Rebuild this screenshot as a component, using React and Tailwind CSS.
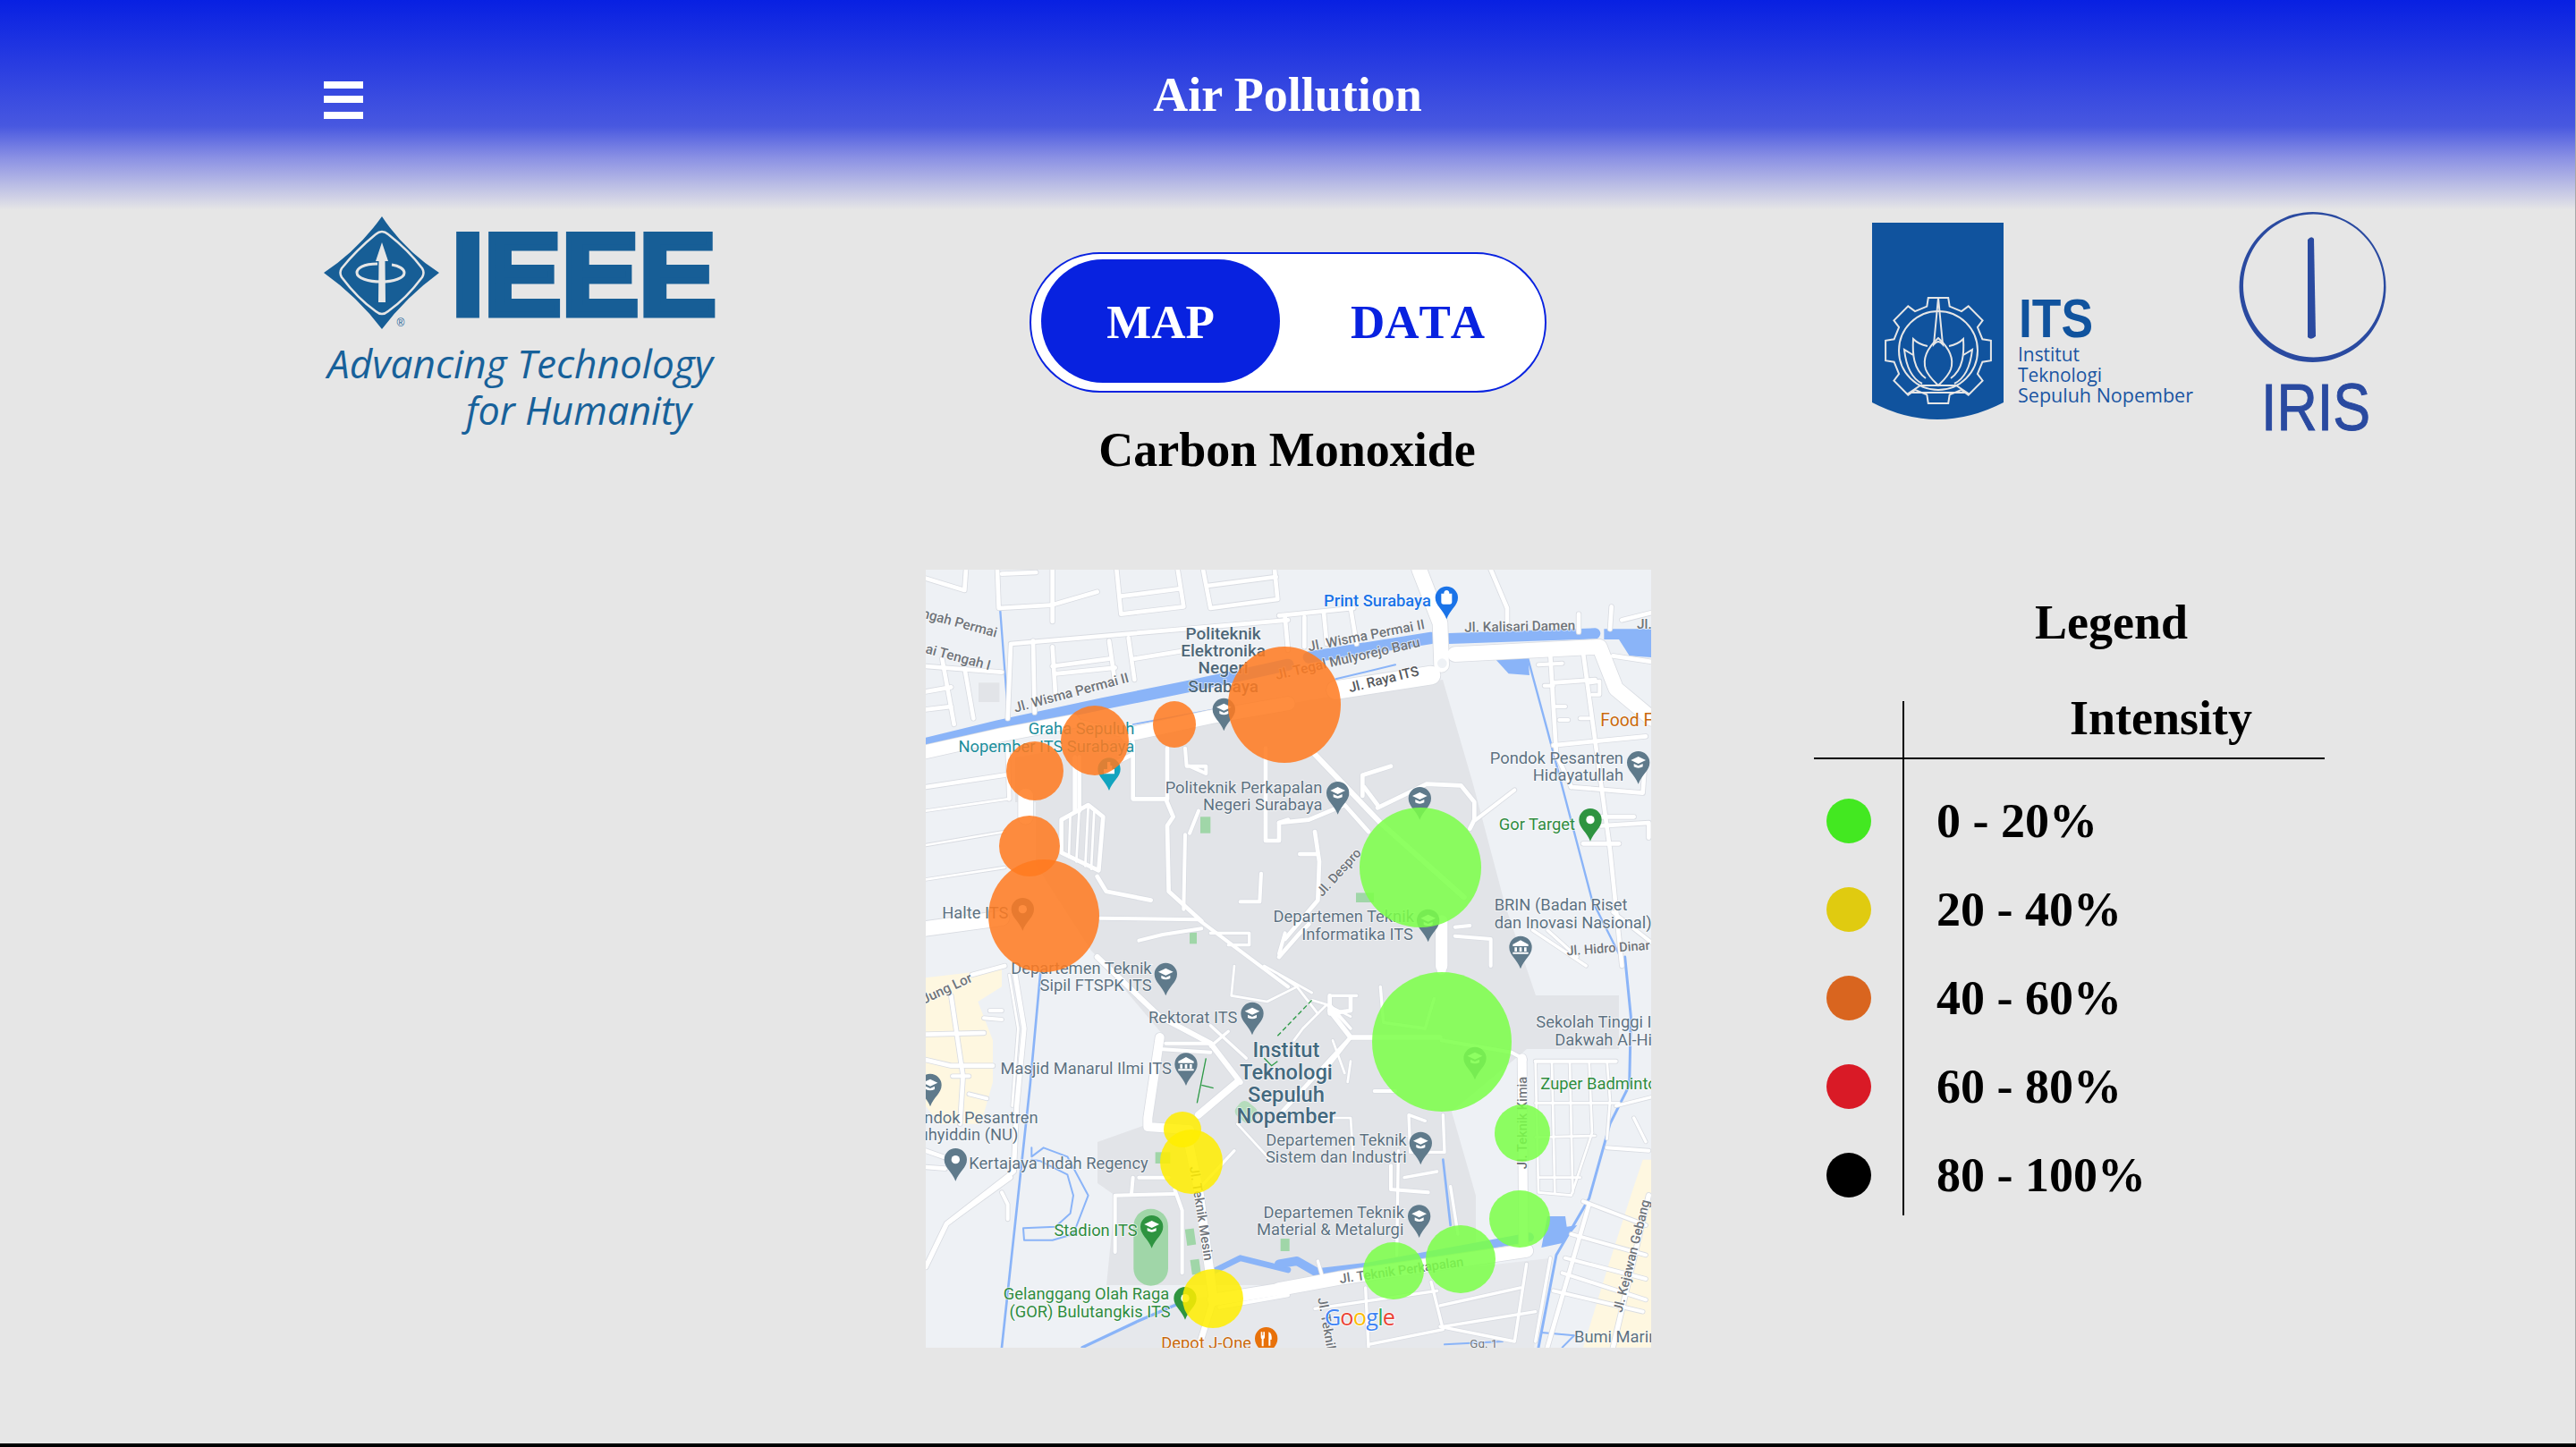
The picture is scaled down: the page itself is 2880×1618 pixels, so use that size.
import React from 'react';

const ROBOTO = "Roboto, 'Liberation Sans', sans-serif";

const SLATE = '#5d7282';
const GREY = '#6f747a';
const TEAL = '#1b8e9c';
const LEAF = '#2f8c3f';
const AMBER = '#c9690c';
const PIN = '#5f7a8b';

// map drawn in four quadrants, each one in 3x coordinates
const QUADS = {
  q1: 'translate(-15,-7) scale(0.33333)',
  q2: 'translate(395,-7) scale(0.33333)',
  q3: 'translate(-15,433) scale(0.33333)',
  q4: 'translate(395,433) scale(0.33333)',
};

const ROADS = {
  q1: [
    [14, '285,20 290,150 465,140 620,95'], [14, '180,20 175,90 45,50'], [14, '300,35 415,30'], [14, '470,20 470,195'],
    [14, '685,20 700,170 910,145 890,20'], [14, '700,110 895,85'], [14, '975,20 1000,150 1225,120 1215,20'], [14, '990,75 1220,45'],
    [14, '330,270 1260,190'], [14, '330,275 320,520'], [14, '405,260 410,500'], [14, '470,280 480,440'], [14, '660,260 680,400'],
    [14, '725,250 745,390'], [14, '470,345 660,320'], [14, '745,320 930,290'], [14, '480,370 680,350'], [14, '45,345 300,365'],
    [14, '100,320 140,540'], [14, '175,350 205,520'], [14, '45,430 130,415'], [14, '45,490 130,480'], [14, '45,750 310,710'],
    [8, '45,830 320,790'], [8, '45,945 310,900'], [8, '45,1060 310,1020'], [14, '320,620 325,790'], [14, '545,650 545,830'], [14, '560,650 560,830'],
    [14, '500,860 590,810 640,850 625,1030 500,970 500,860'], [8, '530,840 525,985'], [8, '560,825 550,1000'], [8, '590,815 580,1015'], [8, '610,830 600,1025'],
    [14, '740,640 740,790 850,790 875,850 855,880 860,1100 970,1200'], [12, '915,620 920,680 985,680 985,705 930,680'], [14, '855,620 855,790'],
    [14, '1185,620 1185,930 1230,930 1230,870 1260,860'], [14, '620,1050 650,1100 800,1130'], [12, '915,910 910,1160'], [12, '960,830 930,905'],
    [12, '1170,1040 1165,1135 1100,1135'], [12, '630,1190 960,1195 1260,1420'], [12, '760,1265 840,1245 970,1225'], [10, '1000,1240 1130,1240 1130,1280 1060,1280'],
    [45, '45,632 300,575 540,530'], [45, '720,575 1000,515 1260,470'], [22, '540,530 720,575'], [14, '640,690 740,640 740,600'], [50, '380,780 380,850'],
    [50, '45,1225 300,1190'],
  ],
  q2: [
    [14, '0,175 250,150'], [14, '20,180 30,290'], [14, '85,180 85,280'], [14, '150,165 160,270'], [14, '240,150 260,270'], [14, '710,20 765,150 765,200'],
    [14, '1005,170 1005,230'], [14, '1115,145 1110,220'], [14, '1150,190 1250,165'], [14, '1020,300 1110,960 1150,1350'], [14, '920,400 1060,390'],
    [14, '920,610 1230,580'], [14, '1120,310 1250,330'], [12, '870,340 950,335'], [12, '890,410 920,410'], [12, '930,480 960,480'], [12, '940,525 970,525'],
    [12, '1010,520 1040,520'], [12, '1045,400 1075,395 1075,440 1050,440'], [14, '980,750 1220,770 1225,700'], [14, '910,310 930,640 980,750'],
    [14, '1045,850 1190,850'], [14, '1080,880 1240,870 1240,920'], [14, '1020,940 1140,940'], [18, '120,640 340,870 620,1120'], [14, '280,780 280,710 375,680'],
    [14, '285,750 330,810'], [14, '330,820 495,740 610,745 655,800 655,860 640,890'], [12, '660,860 790,760'], [14, '0,870 100,860 220,810 300,900'],
    [14, '120,900 135,1000 130,1130 20,1260'], [14, '70,975 130,975'], [40, '545,1200 545,1350'], [12, '590,1220 640,1215'], [12, '590,1250 710,1260 710,1350'],
    [50, '470,20 540,200 545,340'], [62, '190,425 510,375'], [50, '590,305 1070,280'], [50, '1075,280 1130,420 1250,520'], [14, '0,1320 70,1240 100,1210'],
    [12, '20,1240 0,1310'], [10, '850,1230 1030,1350'], [10, '900,1230 1000,1320'], [12, '1120,1170 1260,1280'],
  ],
  q3: [
    [16, '345,60 375,240 350,500 340,720 115,895 45,1040'], [8, '325,60 355,240 335,500'], [14, '200,60 310,30'], [14, '130,130 170,400 160,560'], [14, '45,260 240,255'],
    [12, '240,205 300,210'], [12, '260,180 300,180'], [14, '45,345 130,365 270,365'], [12, '135,400 190,400'], [12, '190,460 250,475'],
    [14, '45,650 130,680'], [14, '45,705 110,710'], [12, '300,790 320,830 320,880'], [14, '115,895 330,740'], [18, '620,0 830,200 1000,290 1100,420'],
    [12, '850,290 1000,290'], [12, '840,310 1000,320'], [24, '960,530 1090,420'], [30, '830,270 790,540 790,570 930,580'], [12, '680,990 680,800 880,795'],
    [12, '740,740 735,795'], [12, '760,740 860,740'], [12, '905,1060 905,850 880,780'], [10, '1080,650 950,790'], [30, '920,590 960,780 1010,1150'],
    [40, '1010,1150 1260,1110'], [20, '1010,1150 960,1310'], [12, '1030,1175 1260,1135'], [8, '1080,30 1070,130 1190,150 1290,100'], [8, '1180,30 1340,120'],
    [8, '1340,145 1390,160 1470,200'], [8, '1390,160 1310,240 1280,280'], [8, '1390,160 1470,240'], [14, '1470,270 1240,520'], [10, '1490,130 1400,130 1400,160 1470,240'],
    [8, '1410,280 1450,390'], [8, '1350,540 1470,540 1480,690'], [10, '1000,230 1120,340'], [10, '1000,300 1060,250'], [8, '1090,560 1200,680'],
  ],
  q4: [
    [45, '0,1115 200,1078 830,985'], [30, '815,340 820,980'], [12, '545,280 780,320 825,345'], [30, '545,0 545,45'], [14, '170,130 170,190 240,180 240,135'],
    [16, '170,180 240,270 540,270'], [10, '520,140 490,240 350,220 340,100'], [8, '0,60 60,100 130,190'], [12, '240,270 130,410'], [8, '240,350 230,420'],
    [12, '320,450 390,450'], [10, '550,530 555,655 440,655 435,530 490,550'], [12, '375,700 375,780 500,790'], [10, '420,740 530,720'], [10, '400,650 395,1000'],
    [10, '575,770 600,930'], [12, '860,350 1130,350'], [8, '860,350 870,790 980,800 1050,590'], [8, '915,350 925,790'], [8, '975,350 985,790'],
    [8, '1040,350 1050,590'], [8, '1100,350 1110,480 1100,610'], [8, '860,490 1140,490'], [8, '860,605 1060,600'], [8, '870,740 1010,740'],
    [14, '1040,830 900,1310'], [12, '1020,820 1230,900'], [12, '980,930 1230,1000'], [12, '960,1010 1230,1080'], [12, '950,1060 1230,1150'], [12, '920,1120 1220,1190'],
    [16, '1240,800 1120,1310'], [10, '130,1020 150,1090'], [10, '290,1110 300,1310'], [10, '510,1090 550,1250 300,1300'], [10, '120,1180 530,1120'], [10, '540,1170 810,1110'],
    [10, '550,1240 860,1190'], [10, '830,1030 790,1290 540,1240'], [10, '910,1010 860,1290'], [12, '1100,640 1240,650'], [10, '1130,500 1250,470'], [10, '1190,540 1230,620'],
  ],
};

const RIVERS = {
  q1: [[40, '45,605 290,545 640,470 930,412 1100,375 1260,340'], [7, '285,30 320,490'], [5, '740,540 1010,490']],
  q2: [[40, '100,315 510,250'], [36, '570,252 1060,235'], [6, '190,388 390,340'], [7, '835,320 900,560 1050,1130 1160,1350']],
  q3: [
    [8, '430,50 395,430 300,1310'], [6, '400,640 400,670 440,640 520,670 590,800 540,930 470,950 375,950 372,910 480,905 530,860 540,800 520,730 430,685 400,680'],
    [10, '570,1310 760,1220 900,1160'], [20, '1000,1060 1100,1010 1260,1050'],
  ],
  q4: [[30, '0,1030 60,1020 130,1060 300,1040 490,1005 840,940'], [9, '1160,0 1180,200 1175,430 1110,560 1040,810 930,1000 870,1310'], [6, '880,1260 990,1270 950,1310'], [8, '550,680 575,900'], [6, '555,1300 750,1290']],
};

const LABELS = {
  q1: [
    { x: 1043, y: 255, t: 'Politeknik', a: 'middle', s: 57, w: 500, c: '#4e6778' }, { x: 1043, y: 313, t: 'Elektronika', a: 'middle', s: 57, w: 500, c: '#4e6778' },
    { x: 1043, y: 370, t: 'Negeri', a: 'middle', s: 57, w: 500, c: '#4e6778' }, { x: 1043, y: 432, t: 'Surabaya', a: 'middle', s: 57, w: 500, c: '#4e6778' },
    { x: 745, y: 572, t: 'Graha Sepuluh', a: 'end', c: TEAL }, { x: 745, y: 632, t: 'Nopember ITS Surabaya', a: 'end', c: TEAL },
    { x: 848, y: 770, t: 'Politeknik Perkapalan' }, { x: 975, y: 828, t: 'Negeri Surabaya' }, { x: 322, y: 1192, t: 'Halte ITS', a: 'end' },
    { x: 280, y: 248, t: 'Tengah Permai', a: 'end', c: GREY, s: 46, r: 15, w: 500 }, { x: 258, y: 358, t: 'Permai Tengah I', a: 'end', c: GREY, s: 46, r: 15, w: 500 },
    { x: 345, y: 500, t: 'Jl. Wisma Permai II', c: GREY, s: 46, r: -15, w: 500 },
  ],
  q2: [
    { x: 150, y: 145, t: 'Print Surabaya', c: '#1a73e8', w: 500 }, { x: 100, y: 295, t: 'Jl. Wisma Permai II', c: GREY, s: 46, r: -11, w: 500 },
    { x: -8, y: 390, t: 'Jl. Tegal Mulyorejo Baru', c: GREY, s: 46, r: -13, w: 500 }, { x: 238, y: 433, t: 'Jl. Raya ITS', c: '#55585c', s: 46, r: -14, w: 500 },
    { x: 622, y: 230, t: 'Jl. Kalisari Damen', c: GREY, s: 46, r: -1, w: 500 }, { x: 1200, y: 218, t: 'Jl.', c: GREY, s: 46, w: 500 },
    { x: 1078, y: 545, t: 'Food Fest', c: AMBER, s: 58 }, { x: 1155, y: 672, t: 'Pondok Pesantren', a: 'end' }, { x: 1155, y: 730, t: 'Hidayatullah', a: 'end' },
    { x: 993, y: 893, t: 'Gor Target', a: 'end', c: LEAF }, { x: 145, y: 1120, t: 'Jl. Despro', c: GREY, s: 44, r: -48, w: 500 },
    { x: 722, y: 1165, t: 'BRIN (Badan Riset' }, { x: 722, y: 1223, t: 'dan Inovasi Nasional)' }, { x: 965, y: 1315, t: 'Jl. Hidro Dinar', c: GREY, s: 44, r: -4, w: 500 },
    { x: 453, y: 1202, t: 'Departemen Teknik', a: 'end' }, { x: 450, y: 1262, t: 'Informatika ITS', a: 'end' },
  ],
  q3: [
    { x: 803, y: 57, t: 'Departemen Teknik', a: 'end' }, { x: 803, y: 115, t: 'Sipil FTSPK ITS', a: 'end' }, { x: 1090, y: 222, t: 'Rektorat ITS', a: 'end' },
    { x: 870, y: 392, t: 'Masjid Manarul Ilmi ITS', a: 'end' }, { x: 422, y: 557, t: 'Pondok Pesantren', a: 'end' }, { x: 355, y: 615, t: 'Muhyiddin (NU)', a: 'end' },
    { x: 190, y: 710, t: 'Kertajaya Indah Regency' }, { x: 755, y: 935, t: 'Stadion ITS', a: 'end', c: LEAF }, { x: 862, y: 1150, t: 'Gelanggang Olah Raga', a: 'end', c: LEAF },
    { x: 866, y: 1208, t: '(GOR) Bulutangkis ITS', a: 'end', c: LEAF }, { x: 1137, y: 1313, t: 'Depot J-One', a: 'end', c: AMBER },
    { x: 40, y: 158, t: 'Jung Lor', c: GREY, s: 46, r: -25, w: 500 }, { x: 930, y: 705, t: 'Jl. Teknik Mesin', c: GREY, s: 44, r: 81, w: 500 },
    { x: 1254, y: 335, t: 'Institut', a: 'middle', s: 71, w: 500, c: '#44697f' }, { x: 1254, y: 410, t: 'Teknologi', a: 'middle', s: 71, w: 500, c: '#44697f' },
    { x: 1254, y: 485, t: 'Sepuluh', a: 'middle', s: 71, w: 500, c: '#44697f' }, { x: 1254, y: 558, t: 'Nopember', a: 'middle', s: 71, w: 500, c: '#44697f' },
  ],
  q4: [
    { x: 428, y: 632, t: 'Departemen Teknik', a: 'end' }, { x: 428, y: 690, t: 'Sistem dan Industri', a: 'end' }, { x: 420, y: 875, t: 'Departemen Teknik', a: 'end' },
    { x: 418, y: 933, t: 'Material & Metalurgi', a: 'end' }, { x: 862, y: 238, t: 'Sekolah Tinggi Ilmu' }, { x: 925, y: 296, t: 'Dakwah Al-Hikmah' },
    { x: 877, y: 445, t: 'Zuper Badminton', c: LEAF }, { x: 832, y: 712, t: 'Jl. Teknik Kimia', c: GREY, s: 44, r: -90, w: 500 },
    { x: 205, y: 1095, t: 'Jl. Teknik Perkapalan', c: GREY, s: 44, r: -8, w: 500 }, { x: 130, y: 1145, t: 'Jl. Teknik', c: GREY, s: 44, r: 80, w: 500 },
    { x: 1150, y: 1195, t: 'Jl. Kejawan Gebang', c: GREY, s: 44, r: -76, w: 500 }, { x: 990, y: 1292, t: 'Bumi Marina' }, { x: 640, y: 1312, t: 'Gg. 1', c: GREY, s: 40 },
  ],
};

const PINS = {
  q1: [{ x: 1045, y: 490, g: 'cap' }, { x: 660, y: 690, c: '#12a4bf', g: 'tower' }, { x: 370, y: 1160, g: 'dot' }],
  q2: [
    { x: 562, y: 115, c: '#1a73e8', g: 'bag' }, { x: 197, y: 770, g: 'cap' }, { x: 472, y: 788, g: 'cap' }, { x: 1205, y: 668, g: 'cap' },
    { x: 1044, y: 860, c: '#2e9440', g: 'dot' }, { x: 500, y: 1198, g: 'cap' }, { x: 810, y: 1288, g: 'bank' },
  ],
  q3: [
    { x: 850, y: 58, g: 'cap' }, { x: 1140, y: 190, g: 'cap' }, { x: 918, y: 360, g: 'bank' }, { x: 60, y: 430, g: 'cap' }, { x: 145, y: 680, g: 'dot' },
    { x: 803, y: 905, c: '#2e9440', g: 'cap' }, { x: 915, y: 1145, c: '#2e9440', g: 'dot' }, { x: 1187, y: 1280, c: '#e8710a', g: 'fork' },
  ],
  q4: [{ x: 657, y: 340, g: 'cap' }, { x: 475, y: 625, g: 'cap' }, { x: 470, y: 870, g: 'cap' }],
};

// x, y, rx, ry in map pixels
const SPOTS = [
  [401, 151, 63, 65, '#ff7a20'], [278, 173, 24, 26, '#ff7a20'], [189, 191, 38, 39, '#ff7a20'], [122, 225, 32, 33, '#ff7a20'],
  [116, 309, 34, 34, '#ff7a20'], [132, 387, 62, 63, '#ff7a20'], [553, 333, 68, 67, '#7cff48'], [577, 528, 78, 78, '#7cff48'],
  [667, 630, 31, 32, '#7cff48'], [664, 726, 34, 32, '#7cff48'], [598, 771, 39, 38, '#7cff48'], [523, 784, 34, 32, '#7cff48'],
  [287, 626, 21, 20, '#ffee00'], [297, 662, 35, 36, '#ffee00'], [321, 815, 34, 33, '#ffee00'],
];

const LEGEND = [
  { color: '#43e821', label: '0 - 20%' },
  { color: '#e0cb10', label: '20 - 40%' },
  { color: '#d9651f', label: '40 - 60%' },
  { color: '#d91a26', label: '60 - 80%' },
  { color: '#000000', label: '80 - 100%' },
];

const Pin = ({ x, y, c = PIN, g }) => (
  <g transform={`translate(${x},${y})`}>
    <path d="M-38,0 a38,38 0 1 1 76,0 c0,27 -26,40 -38,72 c-12,-32 -38,-45 -38,-72 z" fill={c} />
    {g === 'dot' && <circle r="14" fill="#fff" />}
    {g === 'cap' && (
      <g fill="#fff">
        <polygon points="-25,-8 0,-20 25,-8 0,4" />
        <path d="M-15,4 v10 q15,8 30,0 v-10 l-15,7 z" />
      </g>
    )}
    {g === 'tower' && <path d="M-6,-24 h10 v12 h6 v12 h8 v16 h-36 v-16 h12 z" fill="#fff" />}
    {g === 'bag' && <path d="M-18,-14 h36 v28 q0,8 -8,8 h-20 q-8,0 -8,-8 z M-9,-14 a9,11 0 0 1 18,0" fill="#fff" />}
    {g === 'bank' && <path d="M0,-24 l26,14 v6 h-52 v-6 z M-20,0 h8 v14 h-8 z M-4,0 h8 v14 h-8 z M12,0 h8 v14 h-8 z M-26,16 h52 v6 h-52 z" fill="#fff" />}
    {g === 'fork' && <path d="M-18,-22 h5 v12 h3 v-12 h5 v18 q0,5 -4,6 v24 h-6 v-24 q-3,-1 -3,-6 z M8,-22 q12,4 10,26 h-4 v20 h-6 z" fill="#fff" />}
  </g>
);

const Label = ({ x, y, t, a = 'start', c = SLATE, s = 55, w = 400, r }) => (
  <text
    x={x}
    y={y}
    textAnchor={a}
    fill={c}
    fontSize={s}
    fontWeight={w}
    fontFamily={ROBOTO}
    stroke="#ffffff"
    strokeOpacity="0.7"
    strokeWidth="5"
    paintOrder="stroke"
    transform={r ? `rotate(${r} ${x} ${y})` : undefined}
  >
    {t}
  </text>
);

const Lines = ({ list, color, grow = 0 }) =>
  list.map(([w, pts], i) => (
    <polyline key={i} points={pts} fill="none" stroke={color} strokeWidth={w + grow} strokeLinecap="round" strokeLinejoin="round" />
  ));

const CampusMap = () => (
  <svg viewBox="0 0 811 870" className="block h-full w-full">
    <rect width="811" height="870" fill="#eef1f5" />
    {/* campus and yellow land */}
    <polygon
      points="100,210 268,180 405,150 462,140 578,123 612,240 648,376 682,476 775,476 775,536 672,536 588,606 615,700 615,763 435,800 202,800 212,700 192,686 192,640 248,620 265,520 192,433 185,426 123,330 123,260 100,260"
      fill="#e2e4e8"
    />
    <polygon points="175,870 285,816 435,800 697,770 680,870" fill="#e6e8ec" />
    <g transform={QUADS.q3}>
      <polygon points="45,70 300,40 300,100 220,150 270,280 270,420 230,560 90,560 45,500" fill="#fef7e0" />
    </g>
    <g transform={QUADS.q4}>
      <polygon points="1220,680 1250,680 1250,1310 1020,1310 1100,1050 1180,800" fill="#fef7e0" />
    </g>
    <g transform={QUADS.q1}>
      <rect x="222" y="400" width="70" height="65" fill="#e2e4e8" />
      <rect x="966" y="850" width="34" height="55" fill="#a0d6a8" />
      <rect x="930" y="1238" width="24" height="38" fill="#a0d6a8" />
    </g>
    <g transform={QUADS.q2}>
      <rect x="258" y="1105" width="60" height="32" fill="#a0d6a8" />
    </g>
    <g transform={QUADS.q3}>
      <rect x="742" y="845" width="116" height="258" rx="58" fill="#a0d6a8" />
      <rect x="918" y="912" width="30" height="55" fill="#a0d6a8" transform="rotate(-8 933 940)" />
      <rect x="935" y="1015" width="30" height="50" fill="#a0d6a8" transform="rotate(-8 950 1040)" />
      <rect x="1238" y="945" width="22" height="40" fill="#a0d6a8" />
      <rect x="815" y="655" width="50" height="38" fill="#a0d6a8" />
      <rect x="1085" y="490" width="70" height="60" rx="20" fill="#b5dcbc" transform="rotate(40 1120 520)" />
    </g>
    <g transform={QUADS.q4}>
      <rect x="5" y="945" width="30" height="42" fill="#a0d6a8" />
    </g>

    {/* water, then roads on top */}
    {Object.keys(QUADS).map((q) => (
      <g key={q} transform={QUADS[q]}>
        <Lines list={RIVERS[q]} color="#8ab4f8" />
      </g>
    ))}
    <g transform={QUADS.q2}>
      <polygon points="720,315 835,315 840,375 770,370" fill="#8ab4f8" />
      <polygon points="1090,220 1250,220 1250,315 1175,310 1140,255 1090,255" fill="#8ab4f8" />
    </g>
    <g transform={QUADS.q4}>
      <polygon points="900,870 960,870 965,905 1000,900 950,960 880,975" fill="#8ab4f8" />
    </g>
    {Object.keys(QUADS).map((q) => (
      <g key={q} transform={QUADS[q]}>
        <Lines list={ROADS[q]} color="#d9dce2" grow={5} />
      </g>
    ))}
    {Object.keys(QUADS).map((q) => (
      <g key={q} transform={QUADS[q]}>
        <Lines list={ROADS[q]} color="#ffffff" />
      </g>
    ))}
    <g transform={QUADS.q3} fill="none" stroke="#2e9a47" strokeWidth="4">
      <polyline points="985,340 955,490" />
      <polyline points="970,430 1010,440" />
      <polyline points="1180,340 1205,365 1225,350" />
      <polyline points="1225,265 1340,145" strokeDasharray="16 9" />
    </g>
    <g transform={QUADS.q2}>
      <circle cx="547" cy="335" r="16" fill="#eef1f5" />
    </g>

    {Object.keys(QUADS).map((q) => (
      <g key={q} transform={QUADS[q]}>
        {PINS[q].map((p, i) => <Pin key={i} {...p} />)}
        {LABELS[q].map((l, i) => <Label key={i} {...l} />)}
      </g>
    ))}
    <g transform={QUADS.q4}>
      <text x="152" y="1235" fontSize="76" fontWeight="500" fontFamily="'Open Sans', sans-serif" stroke="#ffffff" strokeWidth="5" paintOrder="stroke" textLength="238">
        <tspan fill="#4285f4">G</tspan>
        <tspan fill="#ea4335">o</tspan>
        <tspan fill="#fbbc05">o</tspan>
        <tspan fill="#4285f4">g</tspan>
        <tspan fill="#34a853">l</tspan>
        <tspan fill="#ea4335">e</tspan>
      </text>
    </g>

    {/* readings */}
    {SPOTS.map(([cx, cy, rx, ry, fill], i) => (
      <ellipse key={i} cx={cx} cy={cy} rx={rx} ry={ry} fill={fill} fillOpacity="0.86" />
    ))}
  </svg>
);

const IeeeLogo = () => (
  <svg viewBox="0 0 440 262" className="block h-[262px] w-[440px]">
    <path d="M65,0 Q90,38 129,63 Q92,90 65,126 Q38,90 0,63 Q38,38 65,0 Z" fill="#175e96" />
    <path
      d="M58,20 Q65,14 72,20 Q95,38 110,58 Q113,63 110,68 Q92,92 72,106 Q65,112 58,106 Q38,92 20,68 Q17,63 20,58 Q36,38 58,20 Z"
      fill="none"
      stroke="#e6e6e6"
      strokeWidth="2.5"
    />
    <path d="M65,29 L72,50 H68.5 L69,96 H61 L61.5,50 H58 Z" fill="#e6e6e6" />
    <path d="M60,53 C44,53 37,58 37,63 C37,69 50,73 64,73 C78,73 90,69 90,63 C90,59 84,55 76,54" fill="none" stroke="#e6e6e6" strokeWidth="3" />
    <path d="M58,60 C50,60 47,62 47,64" fill="none" stroke="#175e96" strokeWidth="3" />
    <text x="86" y="123" fontSize="12" fontWeight="400" fill="#175e96" fontFamily="'Liberation Sans', sans-serif" textAnchor="middle">®</text>
    <text
      x="143"
      y="110"
      fontSize="129"
      fontWeight="700"
      fill="#175e96"
      stroke="#175e96"
      strokeWidth="7"
      fontFamily="'Liberation Sans', sans-serif"
      textLength="296"
      lengthAdjust="spacingAndGlyphs"
    >
      IEEE
    </text>
    <text x="4" y="181" fontSize="43" fontWeight="400" fontStyle="italic" fill="#17619a" fontFamily="'Open Sans', sans-serif" textLength="431" lengthAdjust="spacingAndGlyphs">
      Advancing Technology
    </text>
    <text x="159" y="233" fontSize="43" fontWeight="400" fontStyle="italic" fill="#17619a" fontFamily="'Open Sans', sans-serif" textLength="252" lengthAdjust="spacingAndGlyphs">
      for Humanity
    </text>
  </svg>
);

// cog outline for the ITS emblem
const gearPoints = (cx, cy, teeth, inner, outer) => {
  const pts = [];
  const step = (Math.PI * 2) / teeth;
  for (let i = 0; i < teeth; i++) {
    const a = i * step - Math.PI / 2;
    const d = step * 0.2;
    [[a - d * 1.2, outer], [a + d * 1.2, outer], [a + d * 1.6, inner], [a + step - d * 1.6, inner]].forEach(([t, r]) => {
      pts.push(`${(cx + Math.cos(t) * r).toFixed(1)},${(cy + Math.sin(t) * r).toFixed(1)}`);
    });
  }
  return pts.join(' ');
};

const PartnerLogos = () => (
  <svg viewBox="0 0 580 250" className="block h-[250px] w-[580px]">
    <path d="M0,12 H147 V213 Q73,251 0,213 Z" fill="#10539e" />
    <g fill="none" stroke="#e6e6e6" strokeWidth="2">
      <polygon points={gearPoints(74, 155, 8, 51, 60)} />
      <circle cx="74" cy="155" r="44" />
      <path d="M74,96 L69,148 Q74,142 79,148 Z" />
      <path d="M74,141 C62,152 56,164 60,176 C63,184 70,190 74,194 C78,190 85,184 88,176 C92,164 86,152 74,141 Z" />
      <path d="M62,150 C52,148 48,144 46,142 C45,158 46,176 60,186 M86,150 C96,148 100,144 102,142 C103,158 102,176 88,186" />
      <path d="M46,160 L36,154 C38,172 44,186 56,192 M102,160 L112,154 C110,172 104,186 92,192" />
      <path d="M54,194 H94 L106,202 H42 Z" />
    </g>
    <text x="164" y="140" fontSize="61" fontWeight="700" fill="#10539e" fontFamily="'Liberation Sans', sans-serif" textLength="83" lengthAdjust="spacingAndGlyphs">
      ITS
    </text>
    <g fill="#1a55a2" fontSize="21" fontWeight="400" fontFamily="'Open Sans', sans-serif">
      <text x="163" y="167" textLength="69" lengthAdjust="spacingAndGlyphs">Institut</text>
      <text x="163" y="190" textLength="94" lengthAdjust="spacingAndGlyphs">Teknologi</text>
      <text x="163" y="213" textLength="196" lengthAdjust="spacingAndGlyphs">Sepuluh Nopember</text>
    </g>
    <path
      fillRule="evenodd"
      fill="#2a4aa0"
      d="M492.5,0 a82,84 0 1 0 0.01,0 Z M493.5,2.5 a78.5,80 0 1 1 -0.01,0 Z"
    />
    <path d="M487,31 Q491,26 494,30 L496,139 Q491,144 487,140 Z" fill="#2a4aa0" />
    <text x="435" y="244" fontSize="74" fontWeight="400" fill="#2a4aa0" stroke="#2a4aa0" strokeWidth="1" fontFamily="'Liberation Sans', sans-serif" textLength="122" lengthAdjust="spacingAndGlyphs">
      IRIS
    </text>
  </svg>
);

export default function App() {
  return (
    <div className="h-[1618px] bg-black font-['Liberation_Serif',serif] font-bold">
      <div className="h-[1614px] overflow-hidden border-r border-[#a8a8a8] bg-[#e6e6e6]">
        {/* Header */}
        <header className="grid h-[235px] grid-cols-[1fr_auto_1fr] bg-[linear-gradient(180deg,#0820e2_0%,#4858e0_60%,#8a90e4_75%,#e6e6e6_100%)]">
          <button className="mt-[91px] ml-[362px] block h-[42px] w-[44px]">
            <span className="block h-2 bg-white"></span>
            <span className="mt-2 block h-2 bg-white"></span>
            <span className="mt-[10px] block h-2 bg-white"></span>
          </button>
          <h1 className="mt-[79px] text-[54px] leading-none text-white">Air Pollution</h1>
        </header>

        {/* Logos, toggle and title */}
        <section className="grid h-[402px] grid-cols-[789px_578px_1fr] pl-[362px]">
          <div className="pt-[7px]">
            <IeeeLogo />
          </div>
          <div className="pt-[47px]">
            <div className="flex h-[157px] items-center rounded-full border-2 border-[#0822e0] bg-white pb-[3px] pl-[11px] text-[53px] [font-kerning:none]">
              <span className="flex h-[138px] w-[267px] items-center justify-center rounded-full bg-[#0822e0] pt-[3px] text-white">MAP</span>
              <span className="flex-1 pt-[3px] pl-[12px] text-center text-[#0822e0]">DATA</span>
            </div>
            <h2 className="mt-[37px] pr-[2px] text-center text-[54px] leading-none text-black">Carbon Monoxide</h2>
          </div>
          <div className="pt-[2px] pl-[364px]">
            <PartnerLogos />
          </div>
        </section>

        {/* Map and legend */}
        <section className="flex pl-[1035px]">
          <div className="h-[870px] w-[811px] overflow-hidden">
            <CampusMap />
          </div>
          <div className="ml-[182px] w-[571px] text-black">
            <h3 className="mt-[32px] pl-[247px] text-[54px] leading-none">Legend</h3>
            <div className="mt-[61px] flex h-[65px] border-b-2 border-black">
              <div className="w-[101px] border-r-2 border-black"></div>
              <div className="-mt-[8px] pl-[185px] text-[54px] leading-none">Intensity</div>
            </div>
            <div className="flex h-[510px]">
              <div className="w-[101px] border-r-2 border-black pt-[19px]">
                {LEGEND.map((row) => (
                  <div key={row.label} className="flex h-[99px] items-center pl-[14px]">
                    <span className="h-[50px] w-[50px] rounded-full" style={{ backgroundColor: row.color }}></span>
                  </div>
                ))}
              </div>
              <div className="pt-[19px] pl-[36px] text-[54px]">
                {LEGEND.map((row) => (
                  <div key={row.label} className="flex h-[99px] items-center leading-none">{row.label}</div>
                ))}
              </div>
            </div>
          </div>
        </section>
      </div>
    </div>
  );
}
